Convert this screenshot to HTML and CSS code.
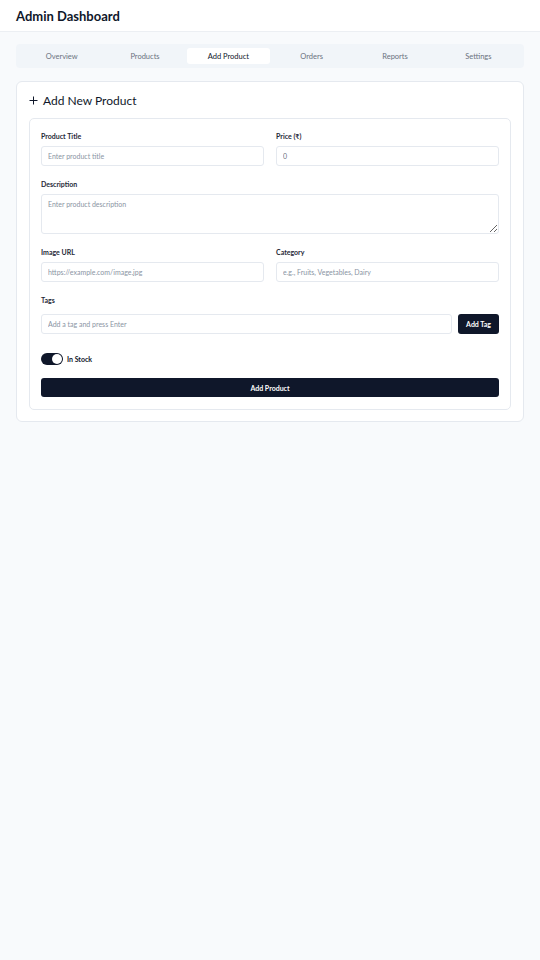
FILE: index.html
```html
<!DOCTYPE html>
<html lang="en">
<head>
    <meta name="viewport" content="width=device-width, initial-scale=1">
    <title>Admin Dashboard</title>
    <link rel="stylesheet" href="styles.css">
</head>
<body>
    <header class="topbar">
        <h1>Admin Dashboard</h1>
    </header>

    <main class="page">
        <nav class="tabs">
            <button class="tab">Overview</button>
            <button class="tab">Products</button>
            <button class="tab active">Add Product</button>
            <button class="tab">Orders</button>
            <button class="tab">Reports</button>
            <button class="tab">Settings</button>
        </nav>

        <section class="card">
            <h2 class="card-title">
                <svg class="plus" width="9" height="9" viewBox="0 0 9 9"><path d="M4.5 0.5v8M0.5 4.5h8" stroke="#0f172a" stroke-width="1" fill="none"/></svg>
                Add New Product
            </h2>

            <form class="form-box">
                <div class="row">
                    <div class="field">
                        <label>Product Title</label>
                        <input type="text" placeholder="Enter product title">
                    </div>
                    <div class="field">
                        <label>Price (₹)</label>
                        <input type="text" value="0">
                    </div>
                </div>

                <div class="field">
                    <label>Description</label>
                    <textarea placeholder="Enter product description"></textarea>
                </div>

                <div class="row">
                    <div class="field">
                        <label>Image URL</label>
                        <input type="text" placeholder="https://example.com/image.jpg">
                    </div>
                    <div class="field">
                        <label>Category</label>
                        <input type="text" placeholder="e.g., Fruits, Vegetables, Dairy">
                    </div>
                </div>

                <div class="field">
                    <label>Tags</label>
                    <div class="tag-row">
                        <input type="text" placeholder="Add a tag and press Enter">
                        <button type="button" class="btn-dark small">Add Tag</button>
                    </div>
                </div>

                <div class="stock">
                    <span class="toggle"><span class="knob"></span></span>
                    <span>In Stock</span>
                </div>

                <button type="button" class="btn-dark full">Add Product</button>
            </form>
        </section>
    </main>
</body>
</html>
```

FILE: styles.css
```css
body {
    margin: 0;
    font-family: Lato, "Noto Sans", sans-serif;
    background-color: #f8fafc;
    color: #0f172a;
}
.topbar {
    background: white;
    height: 31px;
    border-bottom: 1px solid #eceff3;
    display: flex;
    align-items: center;
    padding: 0 16px;
}
.topbar h1 {
    margin: 0;
    font-size: 13px;
    font-weight: 700;
}
.page {
    padding: 12px 16px;
}
.tabs {
    display: grid;
    grid-template-columns: repeat(6, 1fr);
    background: #f1f5f9;
    border-radius: 4px;
    padding: 4px;
    height: 24px;
    box-sizing: border-box;
}
.tab {
    font-family: inherit;
    font-size: 7.5px;
    color: #6b7280;
    background: none;
    border: none;
    border-radius: 3px;
    padding: 0;
}
.tab.active {
    background: white;
    color: #0f172a;
}
.card {
    margin-top: 13px;
    background: white;
    border: 1px solid #e5e9ef;
    border-radius: 6px;
    padding: 10px 12px 11px;
}
.card-title {
    margin: 0 0 9px;
    font-size: 12px;
    line-height: 17px;
    font-weight: 400;
    display: flex;
    align-items: center;
    gap: 5px;
}
.form-box {
    border: 1px solid #e5e9ef;
    border-radius: 5px;
    padding: 12px 11px 12px;
    display: flex;
    flex-direction: column;
    gap: 13px;
}
.row {
    display: grid;
    grid-template-columns: 1fr 1fr;
    gap: 12px;
}
.field {
    display: flex;
    flex-direction: column;
    gap: 5px;
}
label {
    font-size: 7px;
    line-height: 10px;
    font-weight: 700;
    color: #1f2937;
}
input, textarea {
    font-family: inherit;
    font-size: 7px;
    color: #6b7280;
    height: 20px;
    box-sizing: border-box;
    border: 1px solid #e5e9ef;
    border-radius: 3px;
    padding: 0 6px;
    outline: none;
}
input::placeholder, textarea::placeholder {
    color: #8a94a3;
}
textarea {
    height: 40px;
    padding: 5px 6px;
    resize: vertical;
}
.tag-row {
    display: flex;
    gap: 6px;
    margin-top: 4px;
}
.tag-row input {
    flex: 1;
}
.btn-dark {
    font-family: inherit;
    background: #0f172a;
    color: white;
    font-weight: 700;
    border: none;
    border-radius: 3px;
}
.btn-dark.small {
    font-size: 7px;
    height: 20px;
    padding: 0 8px;
}
.btn-dark.full {
    font-size: 7px;
    height: 19px;
}
.stock {
    display: flex;
    align-items: center;
    gap: 4px;
    font-size: 7px;
    font-weight: 700;
    margin-top: 6px;
}
.toggle {
    width: 22px;
    height: 12px;
    border-radius: 6px;
    background: #0f172a;
    position: relative;
}
.knob {
    position: absolute;
    right: 1px;
    top: 1px;
    width: 10px;
    height: 10px;
    border-radius: 50%;
    background: white;
}
```
